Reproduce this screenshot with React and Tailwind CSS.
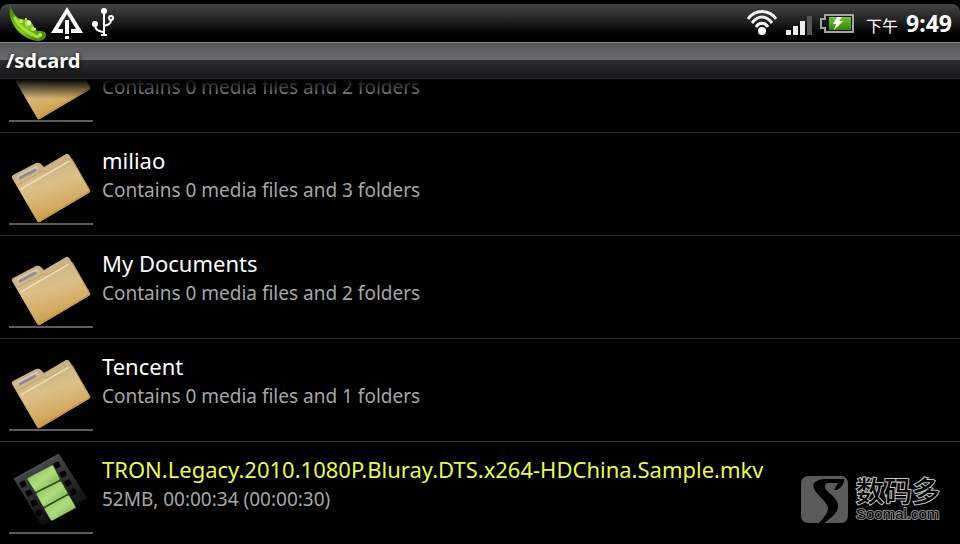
import React from 'react';

// the first row is scrolled half out of view
const entries = [
  { id: 1, name: '', info: 'Contains 0 media files and 2 folders', type: 'folder' },
  { id: 2, name: 'miliao', info: 'Contains 0 media files and 3 folders', type: 'folder' },
  { id: 3, name: 'My Documents', info: 'Contains 0 media files and 2 folders', type: 'folder' },
  { id: 4, name: 'Tencent', info: 'Contains 0 media files and 1 folders', type: 'folder' },
  {
    id: 5,
    name: 'TRON.Legacy.2010.1080P.Bluray.DTS.x264-HDChina.Sample.mkv',
    info: '52MB, 00:00:34 (00:00:30)',
    type: 'video'
  }
];

const filmHoles = [[14, 34], [20, 43], [25, 53], [30, 63], [48, 15], [54, 24], [59, 33], [64, 42]];

function Defs() {
  return (
    <svg className="absolute h-0 w-0" aria-hidden="true">
      <defs>
        <linearGradient id="folder" x1="0.3" y1="0" x2="0.65" y2="1">
          <stop offset="0" stopColor="#bda982" />
          <stop offset="0.45" stopColor="#dcc08a" />
          <stop offset="0.75" stopColor="#d4ab62" />
          <stop offset="1" stopColor="#c48f38" />
        </linearGradient>
        <linearGradient id="film" x1="0.2" y1="0" x2="0.7" y2="1">
          <stop offset="0" stopColor="#55565a" />
          <stop offset="0.5" stopColor="#2b2b2d" />
          <stop offset="1" stopColor="#030303" />
        </linearGradient>
        <linearGradient id="frame" x1="0" y1="0" x2="1" y2="1">
          <stop offset="0" stopColor="#82b852" />
          <stop offset="0.5" stopColor="#b0dc80" />
          <stop offset="1" stopColor="#6dad38" />
        </linearGradient>
        <linearGradient id="pea" x1="0" y1="0" x2="0.6" y2="1">
          <stop offset="0" stopColor="#33600f" />
          <stop offset="0.4" stopColor="#6fb41a" />
          <stop offset="0.7" stopColor="#86cc22" />
          <stop offset="1" stopColor="#4f8a10" />
        </linearGradient>
        <linearGradient id="charge" x1="0" y1="0" x2="0" y2="1">
          <stop offset="0" stopColor="#79c235" />
          <stop offset="0.5" stopColor="#54a518" />
          <stop offset="1" stopColor="#3b8208" />
        </linearGradient>
      </defs>
    </svg>
  );
}

function FolderIcon() {
  return (
    <svg className="h-[82px] w-[84px]" viewBox="0 0 84 82" aria-hidden="true">
      <path
        d="M4 34 L27 22 Q30 21 32 23 L35 26 L57 13 Q59 12 61 15 L81 49 Q82 51 80 52 L31 81 Q29 82 28 80 L3 37 Q2 35 4 34Z"
        fill="url(#folder)"
      />
      <path d="M10 36 L27 27" stroke="#d3c9b4" strokeWidth="4" strokeLinecap="round" />
      <path d="M11 37 L26 29" stroke="#8f8c8c" strokeWidth="3" strokeLinecap="round" />
      <path d="M8 44 L34 30 L38 31 L61 18" fill="none" stroke="#c0a26b" strokeWidth="1" />
      <path d="M12 48 L36 34 L60 20" fill="none" stroke="#eedbb0" strokeWidth="2" />
      <path d="M63 18 L81 50 L30 80" fill="none" stroke="#c0924a" strokeWidth="1" />
    </svg>
  );
}

function VideoIcon() {
  return (
    <svg className="h-[82px] w-[84px]" viewBox="0 0 84 82" aria-hidden="true">
      <path d="M5 29 L50 4 L78 48 L33 76Z" fill="url(#film)" />
      <path d="M5 29 L50 4" stroke="#5c5d60" strokeWidth="1" />
      {filmHoles.map(([x, y]) => (
        <rect key={`${x}-${y}`} x={x - 3} y={y - 3} width="6" height="6" rx="1" fill="#050505" transform={`rotate(-29 ${x} ${y})`} />
      ))}
      <path d="M18 29 L44 15 L67 58 L43 71Z" fill="#2c4a18" />
      <g fill="url(#frame)" stroke="url(#frame)" strokeWidth="3" strokeLinejoin="round">
        <path d="M20 29 L43 17 L49 29 L27 40Z" />
        <path d="M29 44 L51 33 L57 43 L35 55Z" />
        <path d="M37 59 L59 47 L65 57 L43 69Z" />
      </g>
    </svg>
  );
}

function PeaIcon() {
  return (
    <svg className="h-[38px] w-10" viewBox="0 0 40 38" aria-hidden="true">
      <path d="M2 0 C4 6 6 11 10 14 C15 17 20 14 23 18 C26 21 26 26 30 27 C34 27 39 27 38 32 C37 36 33 37 29 37 C22 36 14 32 9 26 C3 19 0 8 2 0Z" fill="url(#pea)" />
      <path d="M7 14 C11 22 19 29 30 33" fill="none" stroke="#a4e13a" strokeWidth="3" strokeLinecap="round" />
      <g fill="#b4ea54">
        <circle cx="13" cy="17" r="2" />
        <circle cx="20" cy="19" r="3" />
        <circle cx="25" cy="25" r="2" />
        <circle cx="32" cy="31" r="2" />
      </g>
      <g fill="#f0ffd0">
        <circle cx="18" cy="15" r="1" />
        <circle cx="21" cy="19" r="2" />
        <circle cx="27" cy="25" r="1" />
      </g>
    </svg>
  );
}

function WarningIcon() {
  return (
    <svg className="h-[38px] w-8" viewBox="0 0 32 38" aria-hidden="true">
      <path fillRule="evenodd" d="M16 3 L32 29 H20 V25 H25 L16 10 L7 25 H12 V29 H0Z" fill="#fff" />
      <path d="M14 16 h4 v14 h-4z M14 32 h4 v3 h-4z" fill="#fff" />
    </svg>
  );
}

function UsbIcon() {
  return (
    <svg className="h-[38px] w-6" viewBox="0 0 24 38" aria-hidden="true">
      <g fill="none" stroke="#fff" strokeWidth="2">
        <path d="M13 6 V31 M10 31 H16 M4 20 C4 26 7 27 12 28 M20 16 C20 20 17 21 13 22" />
        <circle cx="20" cy="14" r="2" />
      </g>
      <circle cx="13" cy="7" r="3" fill="#fff" />
      <circle cx="4" cy="20" r="3" fill="#fff" />
    </svg>
  );
}

function WifiIcon() {
  return (
    <svg className="h-[38px] w-8" viewBox="0 0 32 38" aria-hidden="true">
      <g fill="none" stroke="#f2f2f2" strokeWidth="3">
        <path d="M2 15 C9 5 23 5 30 15" />
        <path d="M6 19 C12 11 20 11 26 19" />
        <path d="M10 23 C13 18 19 18 22 23" />
      </g>
      <circle cx="16" cy="27" r="4" fill="#fff" />
    </svg>
  );
}

function SignalIcon() {
  return (
    <svg className="h-[38px] w-[26px]" viewBox="0 0 26 38" aria-hidden="true">
      <path d="M0 26 h5 v5 h-5z M7 22 h5 v9 h-5z M14 17 h5 v14 h-5z" fill="#eee" />
      <path d="M21 12 h5 v19 h-5z" fill="#555" />
    </svg>
  );
}

function BatteryIcon() {
  return (
    <svg className="h-[38px] w-[34px]" viewBox="0 0 34 38" aria-hidden="true">
      <path d="M5 11 H33 V28 H5 V24 H1 V15 H5Z" fill="#151515" stroke="#a5a5a5" strokeWidth="2" />
      <rect x="9" y="13" width="22" height="13" fill="url(#charge)" />
      <path d="M17 13 H22 L19 17 H23 L14 26 L16 20 H13Z" fill="#fff" />
    </svg>
  );
}

function StatusBar() {
  return (
    <div className="bg-black pt-1">
      <header className="flex h-[38px] items-center justify-between rounded-t-lg bg-linear-to-b from-[#454545] via-[#202020] via-45% to-black px-2">
        <div className="flex items-center">
          <PeaIcon />
          <span className="ml-[3px]"><WarningIcon /></span>
          <span className="ml-2"><UsbIcon /></span>
        </div>
        <div className="flex items-center text-white">
          <WifiIcon />
          <span className="ml-2"><SignalIcon /></span>
          <span className="ml-2"><BatteryIcon /></span>
          <time className="ml-3 flex items-baseline gap-2">
            <span className="font-['Noto_Sans_CJK_SC',sans-serif] text-base font-normal">下午</span>
            <span className="text-[23px] font-bold">9:49</span>
          </time>
        </div>
      </header>
    </div>
  );
}

function EntryRow({ entry }) {
  return (
    <li className="shrink-0 border-b border-[#2e2e2e] last:border-b-0">
      <button type="button" className="flex h-[102px] w-full items-start gap-[9px] pt-2 pl-[9px] text-left">
        <span className="flex shrink-0 border-b-2 border-[#5c5c5c]">
          {entry.type === 'video' ? <VideoIcon /> : <FolderIcon />}
        </span>
        <span className="flex min-w-0 flex-col pt-1">
          <span className={`h-[30px] truncate text-[22px] leading-[30px] ${entry.type === 'video' ? 'text-[#e8f85a]' : 'text-white'}`}>
            {entry.name}
          </span>
          <span className="text-[19px] leading-[30px] text-[#a6a6a6]">{entry.info}</span>
        </span>
      </button>
    </li>
  );
}

function Watermark() {
  return (
    <div className="absolute right-5 bottom-5 flex items-center gap-2">
      <svg className="h-12 w-[47px]" viewBox="0 0 47 48" aria-hidden="true">
        <rect width="47" height="47" rx="7" fill="#5b5b5b" />
        <path
          d="M12 9 C14 4 20 3 26 3 H43 C43 8 41 11 36 14 H33 L37 7 H27 C23 8 23 12 26 15 C32 20 37 24 37 30 C37 38 28 43 22 48 H17 C22 43 27 37 27 32 C26 24 13 19 12 9Z"
          fill="#000"
        />
      </svg>
      <div className="flex flex-col text-black [paint-order:stroke_fill]">
        <span className="font-['Noto_Sans_CJK_SC',sans-serif] text-[28px] leading-7 font-medium [-webkit-text-stroke:2px_#c4c4c4]">数码多</span>
        <span className="font-['Liberation_Sans',sans-serif] text-[15px] leading-5 [-webkit-text-stroke:2px_#8c8c8c]">Soomal.com</span>
      </div>
    </div>
  );
}

export default function App() {
  return (
    <div className="relative flex h-screen flex-col overflow-hidden bg-black font-['Noto_Sans',sans-serif]">
      <Defs />
      <StatusBar />
      <h1 className="h-[37px] border-t border-b border-t-[#858787] border-b-[#2c2d2e] bg-[linear-gradient(to_bottom,#55585a_0,#6a6b6d_49%,#2d2e30_50%,#161718_100%)] pl-[6px] text-[20px] leading-[35px] font-bold text-white [text-shadow:0_1px_4px_#000]">
        /sdcard
      </h1>
      <main className="relative flex min-h-0 flex-1 flex-col">
        <ul className="flex min-h-0 flex-1 flex-col justify-end overflow-hidden">
          {entries.map((entry) => (
            <EntryRow key={entry.id} entry={entry} />
          ))}
        </ul>
        <div className="pointer-events-none absolute inset-x-0 top-0 h-5 bg-linear-to-b from-black to-transparent" />
      </main>
      <Watermark />
    </div>
  );
}
